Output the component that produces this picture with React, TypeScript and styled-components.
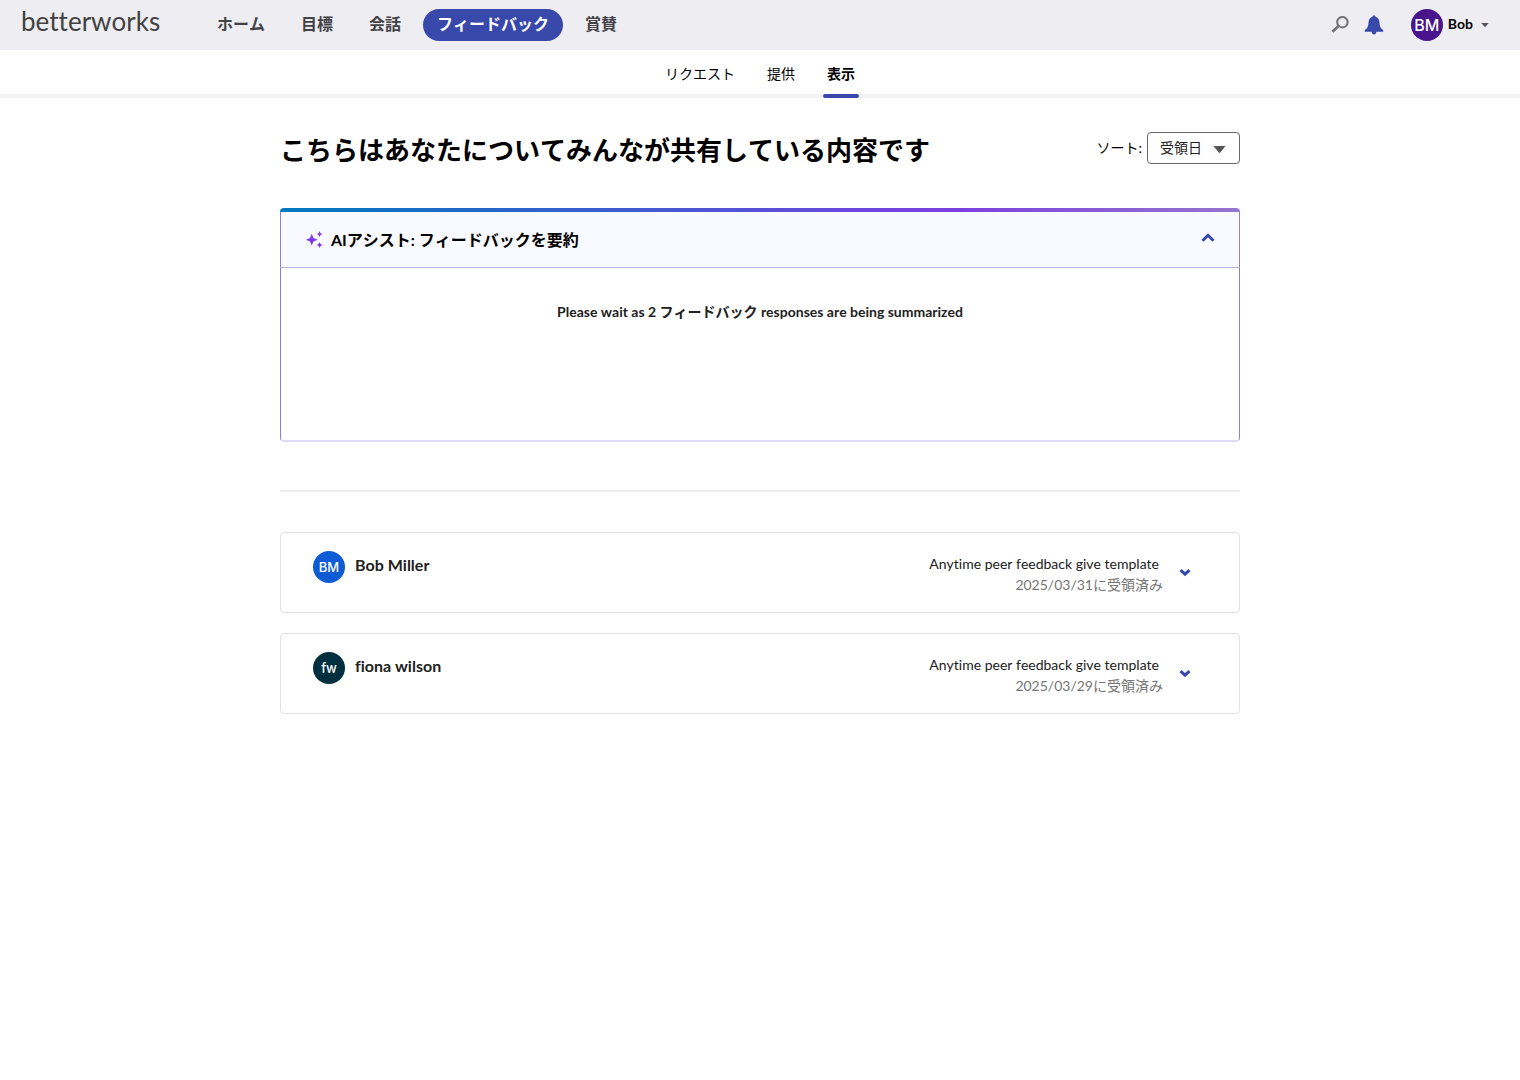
import React, { useId, useState } from "react";
import styled, { createGlobalStyle } from "styled-components";

const color = {
  brand: "#3949ab",
  bar: "#eeedf2",
  ink: "#000000",
  text: "#212121",
  muted: "#757575",
  nav: "#424247",
};

const GlobalStyle = createGlobalStyle`
  *, *::before, *::after { box-sizing: border-box; }
  body {
    margin: 0;
    background: #ffffff;
    color: ${color.text};
    font-family: Lato, "Noto Sans CJK JP", sans-serif;
    font-size: 14px;
    font-kerning: none;
    font-variant-ligatures: none;
    line-height: 20px;
  }
  button, select { font: inherit; color: inherit; }
  h1, h2, h3, p, ul { margin: 0; padding: 0; }
`;

const TopBar = styled.header`
  display: flex;
  align-items: center;
  height: 50px;
  padding: 0 31px 0 21px;
  background: ${color.bar};
`;

const Brand = styled.a`
  width: 182px;
  padding-bottom: 8px;
  color: #424242;
  font-size: 26px;
  font-weight: 400;
  line-height: 32px;
  text-decoration: none;
`;

const MainNav = styled.nav`
  display: flex;
  flex: 1;
  gap: 8px;
`;

const NavLink = styled.a<{ $active?: boolean }>`
  padding: 0 14px 2px;
  border-radius: 16px;
  background: ${(p) => (p.$active ? color.brand : "transparent")};
  color: ${(p) => (p.$active ? "#ffffff" : color.nav)};
  font-size: 16px;
  font-weight: 700;
  line-height: 30px;
  text-decoration: none;
`;

const Tools = styled.div`
  display: flex;
  align-items: center;
`;

const IconButton = styled.button`
  display: flex;
  align-items: center;
  justify-content: center;
  width: 34px;
  height: 32px;
  padding: 0;
  border: 0;
  background: none;
  cursor: pointer;
`;

const UserButton = styled.button`
  display: flex;
  align-items: center;
  margin-left: 20px;
  padding: 0;
  border: 0;
  background: none;
  color: ${color.ink};
  font-weight: 700;
  cursor: pointer;
`;

const UserName = styled.span`
  padding: 0 8px 2px 5px;
`;

const Avatar = styled.span<{ $fill: string; $size: number }>`
  display: flex;
  align-items: center;
  justify-content: center;
  width: 32px;
  height: 32px;
  border-radius: 50%;
  background: ${(p) => p.$fill};
  color: #ffffff;
  font-family: Inter, Arial, sans-serif;
  font-size: ${(p) => p.$size}px;
  font-weight: 500;
`;

const SubNav = styled.nav`
  display: flex;
  justify-content: center;
  gap: 24px;
  height: 48px;
  border-bottom: 4px solid #f4f4f7;
`;

const SubLink = styled.a<{ $active?: boolean }>`
  height: 48px;
  padding: 14px 4px 0;
  color: ${color.ink};
  font-weight: ${(p) => (p.$active ? 700 : 400)};
  text-decoration: none;

  &::after {
    content: "";
    display: block;
    height: 4px;
    margin: 10px -4px 0;
    border-radius: 2px;
    background: ${(p) => (p.$active ? color.brand : "transparent")};
  }
`;

const Page = styled.main`
  max-width: 960px;
  margin: 0 auto;
  padding-top: 32px;
`;

const Heading = styled.div`
  display: flex;
  align-items: flex-start;
  justify-content: space-between;
  margin-bottom: 40px;
`;

const Title = styled.h1`
  padding-top: 2px;
  color: ${color.ink};
  font-size: 26px;
  font-weight: 700;
  line-height: 36px;
`;

const Sort = styled.div`
  display: flex;
  align-items: center;
  gap: 5px;
  padding-top: 2px;
  color: ${color.ink};
`;

const SelectBox = styled.div`
  display: grid;
  align-items: center;
  width: 93px;
  height: 32px;

  > * { grid-area: 1 / 1; }
  > svg {
    justify-self: end;
    margin: 2px 14px 0 0;
    pointer-events: none;
  }
`;

const Select = styled.select`
  width: 100%;
  height: 32px;
  padding: 0 28px 0 12px;
  border: 1px solid #66666b;
  border-radius: 4px;
  background: #ffffff;
  color: ${color.text};
  appearance: none;
`;

const Assist = styled.section`
  border-radius: 4px;
  overflow: hidden;
`;

const AssistStripe = styled.div`
  height: 4px;
  background: linear-gradient(90deg, #0079bf 0%, #7c3fe0 70%, #9575cd 100%);
`;

const AssistHead = styled.div`
  display: flex;
  align-items: center;
  gap: 8px;
  height: 56px;
  padding: 0 14px 0 25px;
  border: 1px solid #8b7fd6;
  border-top: 0;
  border-bottom-color: #b9b3e3;
  background: #f9faff;
`;

const AssistTitle = styled.h2`
  flex: 1;
  color: ${color.ink};
  font-size: 16px;
  font-weight: 700;
  line-height: 24px;
`;

const Collapse = styled(IconButton)`
  padding-bottom: 3px;
`;

const AssistBody = styled.div`
  min-height: 174px;
  padding: 34px 24px;
  border: 1px solid #8b7fd6;
  border-top: 0;
  border-bottom: 2px solid #dedcf6;
  border-radius: 0 0 4px 4px;
  font-weight: 700;
  text-align: center;
`;

const Divider = styled.hr`
  height: 2px;
  margin: 48px 0 40px;
  border: 0;
  background: #eeeeee;
`;

const Responses = styled.ul`
  display: grid;
  gap: 20px;
  list-style: none;
`;

const Response = styled.li`
  display: flex;
  align-items: flex-start;
  height: 81px;
  padding: 18px 40px 0 32px;
  border: 1px solid #e0e0e5;
  border-radius: 4px;
`;

const Author = styled.h3`
  flex: 1;
  padding: 2px 10px;
  font-size: 16px;
  font-weight: 700;
  line-height: 24px;
`;

const Details = styled.div`
  padding-top: 2px;
  line-height: 21px;
  text-align: right;
`;

const Template = styled.p`
  padding-right: 4px;
`;

const Received = styled.p`
  color: ${color.muted};
`;

const Toggle = styled(IconButton)`
  width: 28px;
  height: 32px;
  margin: 5px 0 0 8px;
`;

const SearchIcon = () => (
  <svg width="18" height="18" viewBox="0 0 18 18" fill="none" stroke="#757575" aria-hidden="true">
    <circle cx="11.4" cy="6.200" r="5.200" strokeWidth="2.100" />
    <path d="M7.600 10 1.400 15.800" strokeWidth="2.800" />
  </svg>
);

const BellIcon = () => (
  <svg width="20" height="20" viewBox="0 0 20 20" fill={color.brand} aria-hidden="true">
    <path d="M10 .5c.9 0 1.400.5 1.500 1.300 2.300.6 3.600 2.500 3.900 5.100.3 3.900.9 6.500 3.800 8.100v1.800H12.300c-.1 1.600-1 2.700-2.300 2.700s-2.200-1.100-2.300-2.700H.8V15c2.900-1.600 3.500-4.200 3.800-8.100.3-2.600 1.600-4.500 3.900-5.100C8.600 1 9.100.5 10 .5Z" />
  </svg>
);

const Triangle = ({ width, height }: { width: number; height: number }) => (
  <svg width={width} height={height} viewBox="0 0 12 7" fill="#55555a" preserveAspectRatio="none" aria-hidden="true">
    <path d="M.4 0h11.200L6.700 6.600a1 1 0 0 1-1.400 0Z" />
  </svg>
);

const SparkleIcon = () => (
  <svg width="17" height="17" viewBox="0 0 17 17" fill="#7c3aed" aria-hidden="true">
    <path d="M5.700 2.800 7.500 7l4.200 1.700-4.200 1.700-1.800 4.200-1.700-4.200L0 8.700 4 7ZM13.600 0l.9 2.200 2.100.9-2.100.9-.9 2.200-.9-2.200-2.100-.9 2.100-.9ZM13.600 11l.9 2.100 2.100.9-2.100.9-.9 2.100-.9-2.100-2.100-.9 2.100-.9Z" />
  </svg>
);

const Chevron = ({ up, size }: { up?: boolean; size: number }) => (
  <svg width={size} height={size} viewBox="0 0 14 14" fill="none" stroke={color.brand} strokeWidth={up ? 3 : 3.600} aria-hidden="true">
    <path d={up ? "M1.500 9.700 7 4.300l5.500 5.400" : "M1.800 4.700 7 9.500l5.200-4.800"} />
  </svg>
);

const navItems = ["ホーム", "目標", "会話", "フィードバック", "賞賛"];
const subItems = ["リクエスト", "提供", "表示"];
const responses = [
  { name: "Bob Miller", initials: "BM", fill: "#0f5bd3", date: "2025/03/31に受領済み" },
  { name: "fiona wilson", initials: "fw", fill: "#00303f", date: "2025/03/29に受領済み" },
];

export default function App() {
  const sortId = useId();
  const [open, setOpen] = useState(true);

  return (
    <>
      <GlobalStyle />
      <TopBar>
        <Brand href="#">betterworks</Brand>
        <MainNav>
          {navItems.map((item) => (
            <NavLink key={item} href="#" $active={item === "フィードバック"}>
              {item}
            </NavLink>
          ))}
        </MainNav>
        <Tools>
          <IconButton aria-label="検索"><SearchIcon /></IconButton>
          <IconButton aria-label="通知"><BellIcon /></IconButton>
          <UserButton>
            <Avatar $fill="#4a148c" $size={16}>BM</Avatar>
            <UserName>Bob</UserName>
            <Triangle width={8} height={4} />
          </UserButton>
        </Tools>
      </TopBar>
      <SubNav>
        {subItems.map((item) => (
          <SubLink key={item} href="#" $active={item === "表示"}>
            {item}
          </SubLink>
        ))}
      </SubNav>
      <Page>
        <Heading>
          <Title>こちらはあなたについてみんなが共有している内容です</Title>
          <Sort>
            <label htmlFor={sortId}>ソート:</label>
            <SelectBox>
              <Select id={sortId} defaultValue="received">
                <option value="received">受領日</option>
              </Select>
              <Triangle width={13} height={7} />
            </SelectBox>
          </Sort>
        </Heading>

        <Assist>
          <AssistStripe />
          <AssistHead>
            <SparkleIcon />
            <AssistTitle>AIアシスト: フィードバックを要約</AssistTitle>
            <Collapse aria-label="要約の表示切り替え" aria-expanded={open} onClick={() => setOpen(!open)}>
              <Chevron up={open} size={14} />
            </Collapse>
          </AssistHead>
          {open && <AssistBody>Please wait as 2 フィードバック responses are being summarized</AssistBody>}
        </Assist>

        <Divider />

        <Responses>
          {responses.map((r) => (
            <Response key={r.name}>
              <Avatar $fill={r.fill} $size={13}>{r.initials}</Avatar>
              <Author>{r.name}</Author>
              <Details>
                <Template>Anytime peer feedback give template</Template>
                <Received>{r.date}</Received>
              </Details>
              <Toggle aria-label={`${r.name}のフィードバックを開く`}>
                <Chevron size={12} />
              </Toggle>
            </Response>
          ))}
        </Responses>
      </Page>
    </>
  );
}
